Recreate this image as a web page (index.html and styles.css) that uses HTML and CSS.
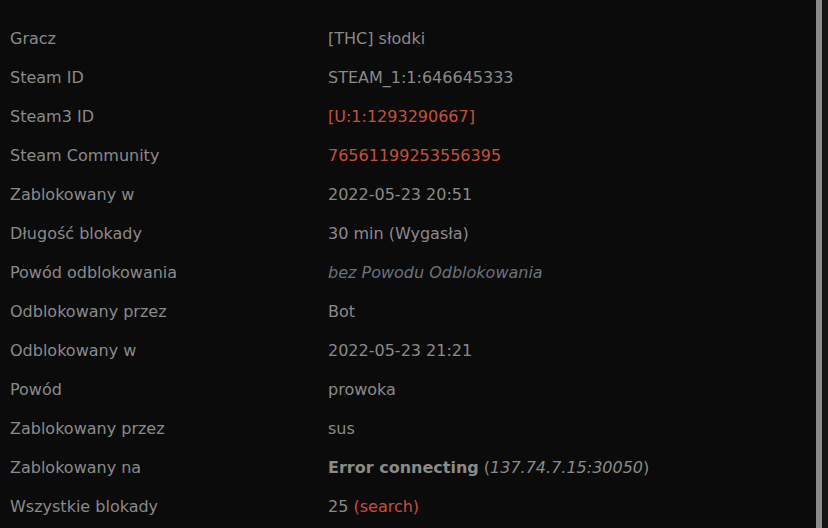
FILE: index.html
```html
<!DOCTYPE html>
<html lang="pl">
<head>
<meta charset="utf-8">
<title>Szczegóły blokady</title>
<link rel="stylesheet" href="styles.css">
</head>
<body>
<div class="page">
  <div class="content">
    <dl class="details">
      <dt>Gracz</dt><dd>[THC] słodki</dd>
      <dt>Steam ID</dt><dd>STEAM_1:1:646645333</dd>
      <dt>Steam3 ID</dt><dd><a class="link">[U:1:1293290667]</a></dd>
      <dt>Steam Community</dt><dd><a class="link">76561199253556395</a></dd>
      <dt>Zablokowany w</dt><dd>2022-05-23 20:51</dd>
      <dt>Długość blokady</dt><dd>30 min (Wygasła)</dd>
      <dt>Powód odblokowania</dt><dd><em class="muted">bez Powodu Odblokowania</em></dd>
      <dt>Odblokowany przez</dt><dd>Bot</dd>
      <dt>Odblokowany w</dt><dd>2022-05-23 21:21</dd>
      <dt>Powód</dt><dd>prowoka</dd>
      <dt>Zablokowany przez</dt><dd>sus</dd>
      <dt>Zablokowany na</dt><dd><strong>Error connecting</strong> (<em>137.74.7.15:30050</em>)</dd>
      <dt>Wszystkie blokady</dt><dd>25 <a class="link">(search)</a></dd>
    </dl>
  </div>
  <div class="scrollbar"></div>
  <div class="gutter"></div>
</div>
</body>
</html>
```

FILE: styles.css
```css
html, body {
  margin: 0;
  padding: 0;
  background: #0b0b0b;
  height: 100%;
  overflow: hidden;
}

.page {
  display: flex;
  height: 528px;
  font-family: "DejaVu Sans", Verdana, sans-serif;
  font-size: 16px;
  color: #8a8a8a;
}

.content {
  flex: 1;
  padding-top: 19px;
}

.details {
  display: grid;
  grid-template-columns: 318px 1fr;
  grid-auto-rows: 39px;
  margin: 0;
  padding-left: 10px;
  line-height: 39px;
}

.details dt,
.details dd {
  margin: 0;
  white-space: nowrap;
}

.link {
  color: #c5503c;
  text-decoration: none;
}

.muted {
  color: #6a737d;
}

.scrollbar {
  width: 6px;
  background: #8b8b8b;
}

.gutter {
  width: 6px;
  background: #141414;
}
```
